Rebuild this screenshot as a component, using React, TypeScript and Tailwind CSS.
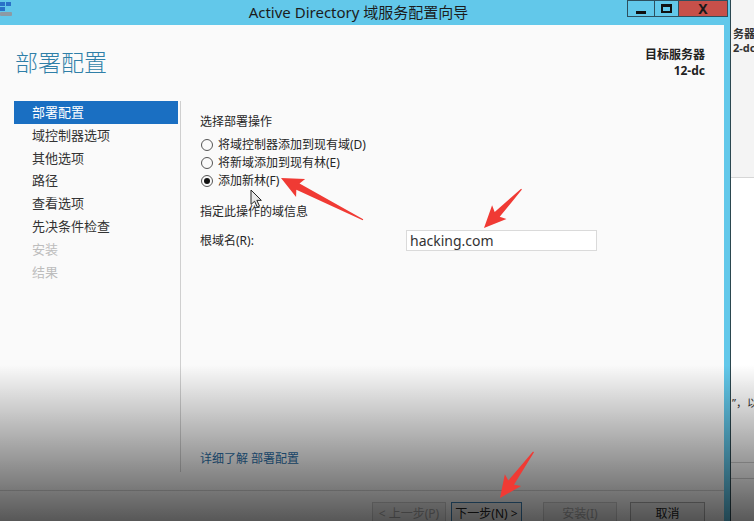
import type { ReactNode } from 'react'

const FONT = { fontFamily: '"Noto Sans", "Noto Sans CJK SC", sans-serif' }

const STEPS = [
  { label: '部署配置', active: true },
  { label: '域控制器选项' },
  { label: '其他选项' },
  { label: '路径' },
  { label: '查看选项' },
  { label: '先决条件检查' },
  { label: '安装', disabled: true },
  { label: '结果', disabled: true },
]

const OPTIONS = [
  { label: '将域控制器添加到现有域(D)', checked: false },
  { label: '将新域添加到现有林(E)', checked: false },
  { label: '添加新林(F)', checked: true },
]

// red annotation arrow, tip at (x, y), pointing back along angle
function Arrow({ x, y, angle, length }: { x: number; y: number; angle: number; length: number }) {
  const L = length
  return (
    <g transform={`translate(${x} ${y}) rotate(${angle})`}>
      <polygon
        points={`0,0 22,-10 19,-3.5 ${L},-0.6 ${L},0.6 19,3.5 22,10`}
        fill="#f03a34"
      />
    </g>
  )
}

function WinButton({ children, className }: { children: ReactNode; className: string }) {
  return (
    <div className={`flex h-[17px] items-center justify-center border border-[#2d4f5e] ${className}`}>
      {children}
    </div>
  )
}

function Button({ children, variant }: { children: ReactNode; variant: 'disabled' | 'primary' | 'normal' }) {
  const styles = {
    disabled: 'border-[#cfcfcf] text-[#a8a8a8]',
    primary: 'border-[#3c7fb1] text-[#222]',
    normal: 'border-[#acacac] text-[#222]',
  }[variant]
  return (
    <div className={`flex h-[23px] items-center justify-center border bg-[#eeeeee] text-[12px] ${styles}`}>
      {children}
    </div>
  )
}

export default function App() {
  return (
    <div className="relative flex h-[521px] w-[754px] overflow-hidden bg-[#f2f2f2]" style={FONT}>
      {/* wizard window */}
      <div className="flex w-[731px] shrink-0 flex-col border-r border-[#2b4750]">
        <div className="flex h-[25px] shrink-0 items-start bg-[#62c8ea]">
          <svg width="14" height="18" viewBox="0 0 14 18" className="mt-[1px] shrink-0">
            <rect x="0" y="1" width="5" height="4" fill="#2a72c8" />
            <rect x="6" y="1" width="5" height="4" fill="#2a72c8" />
            <rect x="0" y="6" width="5" height="4" fill="#2a72c8" />
            <rect x="0" y="11" width="12" height="4" rx="1" fill="#8c9aa4" />
          </svg>
          <div className="flex-1 pl-[76px] text-center text-[15px] leading-[24px] text-[#1c1c1c]">
            Active Directory 域服务配置向导
          </div>
          <div className="mr-[2px] flex">
            <WinButton className="w-[28px] bg-[#62c8ea]">
              <div className="mt-[7px] h-[3px] w-[10px] bg-[#111]" />
            </WinButton>
            <WinButton className="-ml-px w-[25px] bg-[#62c8ea]">
              <div className="h-[9px] w-[11px] border-2 border-t-[3px] border-[#111]" />
            </WinButton>
            <WinButton className="-ml-px w-[50px] bg-[#c7504a]">
              <span className="text-[14px] font-bold leading-none text-[#1a1a1a]">X</span>
            </WinButton>
          </div>
        </div>

        <div className="flex flex-1">
          <div className="flex w-[724px] flex-col bg-[#fafafa]">
            <div className="flex h-[76px] shrink-0 items-start justify-between pl-[15px] pr-[19px] pt-[22px]">
              <h1 className="mt-px text-[23px] font-light leading-[28px] text-[#2f7fa8]">部署配置</h1>
              <div className="text-right text-[12px] font-bold leading-[16px] text-[#222]">
                <div>目标服务器</div>
                <div>12-dc</div>
              </div>
            </div>

            <div className="flex h-[371px] shrink-0">
              <ul className="w-[181px] shrink-0 border-r border-[#cfcfcf] pl-[14px] pr-[2px]">
                {STEPS.map((step) => (
                  <li
                    key={step.label}
                    className={`h-[22.8px] pl-[18px] text-[13px] leading-[23px] ${
                      step.active ? 'bg-[#1a6fc2] text-white' : step.disabled ? 'text-[#bdbdbd]' : 'text-[#333]'
                    }`}
                  >
                    {step.label}
                  </li>
                ))}
              </ul>

              <div className="flex flex-1 flex-col pl-[19px] pt-[13px] text-[12px] text-[#262626]">
                <div className="leading-[16px]">选择部署操作</div>
                <div className="mt-[6px]">
                  {OPTIONS.map((opt) => (
                    <div key={opt.label} className="flex h-[18px] items-center">
                      <span className="ml-[1px] mr-[5px] flex h-[12px] w-[12px] items-center justify-center rounded-full border border-[#555]">
                        {opt.checked && <span className="h-[6px] w-[6px] rounded-full bg-[#111]" />}
                      </span>
                      {opt.label}
                    </div>
                  ))}
                </div>
                <div className="mt-[14px] leading-[16px]">指定此操作的域信息</div>
                <div className="mt-[10px] flex items-center">
                  <span className="w-[206px]">根域名(R):</span>
                  <div className="flex h-[21px] w-[191px] items-center border border-[#dadada] bg-white px-[3px] text-[14px] text-[#333]">
                    hacking.com
                  </div>
                </div>
                <a className="mt-auto pb-[5px] leading-[16px] text-[#2a6ea6]">详细了解 部署配置</a>
              </div>
            </div>

            <div className="h-[18px] shrink-0" />
            <div className="flex flex-1 items-start gap-[5px] border-t border-[#d4d4d4] pl-[372px] pr-[19px] pt-[11px]">
              <div className="w-[74px]">
                <Button variant="disabled">&lt; 上一步(P)</Button>
              </div>
              <div className="w-[71px]">
                <Button variant="primary">下一步(N) &gt;</Button>
              </div>
              <div className="ml-[16px] w-[74px]">
                <Button variant="disabled">安装(I)</Button>
              </div>
              <div className="ml-[8px] w-[75px]">
                <Button variant="normal">取消</Button>
              </div>
            </div>
          </div>
          <div className="w-[6px] bg-[#62c8ea]" />
        </div>
      </div>

      {/* window behind, on the right */}
      <div className="flex flex-1 flex-col overflow-hidden whitespace-nowrap text-[11px] text-[#333]">
        <div className="h-[178px] shrink-0 border-b border-[#d6d6d6] bg-[#f4f4f4] pl-[2px] pt-[27px] font-bold leading-[14px]">
          <div>务器</div>
          <div>2-dc</div>
        </div>
        <div className="flex flex-1 flex-col bg-white">
          <div className="pl-[1px] pt-[218px] leading-[14px]">”，以</div>
          <div className="mt-[52px] h-[17px] border-y border-[#d0d0d0]" />
        </div>
      </div>

      {/* video shading */}
      <div className="pointer-events-none absolute inset-x-0 bottom-0 top-[365px] bg-linear-to-b from-transparent to-black/65" />

      {/* annotations */}
      <svg className="pointer-events-none absolute left-0 top-0" width="754" height="521">
        <Arrow x={281} y={178} angle={27} length={92} />
        <Arrow x={484} y={228} angle={-46} length={54} />
        <Arrow x={500} y={498} angle={-54} length={57} />
        <g transform="translate(251 190) scale(0.9)">
          <path
            d="M0 0 L0 16 L4 12.5 L7 19 L9.5 18 L6.5 11.5 L11.5 11.5 Z"
            fill="#e8e8e8"
            stroke="#222"
            strokeWidth="1.1"
            strokeLinejoin="round"
          />
        </g>
      </svg>
    </div>
  )
}
